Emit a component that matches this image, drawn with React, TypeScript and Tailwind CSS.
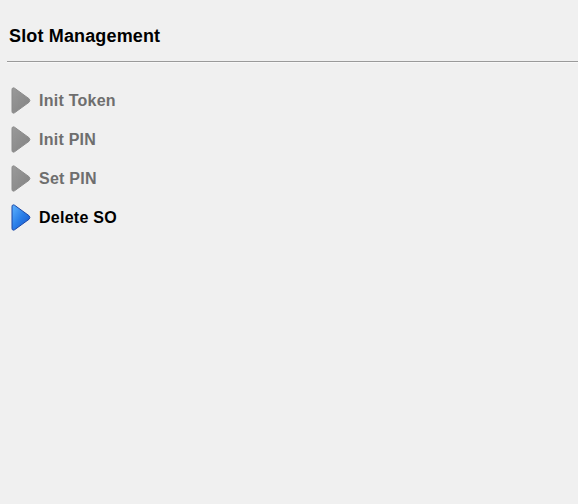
import React from 'react'

type Item = { label: string; active?: boolean }

const items: Item[] = [
  { label: 'Init Token' },
  { label: 'Init PIN' },
  { label: 'Set PIN' },
  { label: 'Delete SO', active: true },
]

function Arrow({ active }: { active?: boolean }) {
  const id = active ? 'arrowBlue' : 'arrowGray'
  return (
    <svg width="20" height="27" viewBox="0 0 20 27" className="shrink-0">
      <defs>
        <linearGradient id={id} x1="0" y1="0" x2="1" y2="1">
          {active ? (
            <>
              <stop offset="0" stopColor="#5fb4ff" />
              <stop offset="0.5" stopColor="#2a7ee8" />
              <stop offset="1" stopColor="#1452c8" />
            </>
          ) : (
            <>
              <stop offset="0" stopColor="#9a9a9a" />
              <stop offset="1" stopColor="#828282" />
            </>
          )}
        </linearGradient>
      </defs>
      <path
        d="M3.5 1.2 Q1 0 1 3 V24 Q1 27 3.5 25.8 L18 15.3 Q19.8 13.5 18 11.7 Z"
        fill={`url(#${id})`}
        stroke={active ? '#1845a8' : '#8a8a8a'}
        strokeWidth="1"
      />
    </svg>
  )
}

export default function App() {
  return (
    <div className="h-[504px] w-[578px] bg-[#f0f0f0] font-['Liberation_Sans',Arial,sans-serif]">
      <div className="px-[9px] pt-[25px] pb-[14px]">
        <h1 className="text-[18px] font-bold leading-[22px] tracking-[0.15px] text-black">
          Slot Management
        </h1>
      </div>
      <div className="ml-[7px] h-[2px] border-t border-[#9a9a9a] bg-[#f8f8f8]" />
      <div className="flex flex-col pt-[18px]">
        {items.map((item) => (
          <div key={item.label} className="flex h-[39px] items-center gap-[8px] pl-[11px]">
            <Arrow active={item.active} />
            <span
              className={`text-[16px] font-bold leading-[20px] tracking-[0.25px] ${
                item.active ? 'text-black' : 'text-[#6e6e6e]'
              }`}
            >
              {item.label}
            </span>
          </div>
        ))}
      </div>
    </div>
  )
}
